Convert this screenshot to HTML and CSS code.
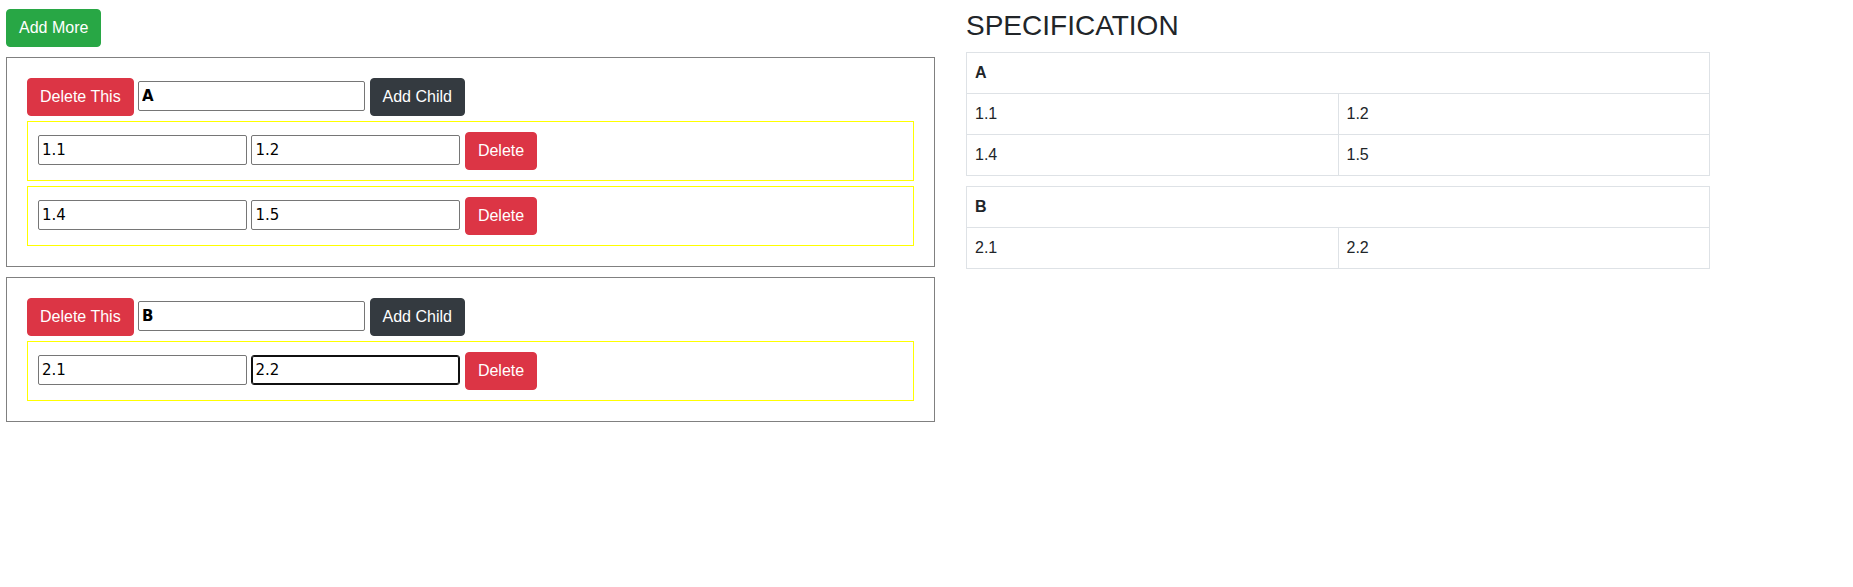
FILE: index.html
```html
<!DOCTYPE html>
<html lang="en">
<head>
<meta charset="utf-8">
<title>Specification</title>
<link rel="stylesheet" href="styles.css">
</head>
<body>
<div class="page">
  <div class="editor">
    <button class="btn btn-success add-more">Add More</button>

    <div class="group">
      <div class="row">
        <button class="btn btn-danger">Delete This</button>
        <input class="field field-title" type="text" value="A">
        <button class="btn btn-dark">Add Child</button>
      </div>
      <div class="child">
        <div class="row">
          <input class="field field-child" type="text" value="1.1">
          <input class="field field-child" type="text" value="1.2">
          <button class="btn btn-danger">Delete</button>
        </div>
      </div>
      <div class="child">
        <div class="row">
          <input class="field field-child" type="text" value="1.4">
          <input class="field field-child" type="text" value="1.5">
          <button class="btn btn-danger">Delete</button>
        </div>
      </div>
    </div>

    <div class="group">
      <div class="row">
        <button class="btn btn-danger">Delete This</button>
        <input class="field field-title" type="text" value="B">
        <button class="btn btn-dark">Add Child</button>
      </div>
      <div class="child">
        <div class="row">
          <input class="field field-child" type="text" value="2.1">
          <input class="field field-child is-focused" type="text" value="2.2">
          <button class="btn btn-danger">Delete</button>
        </div>
      </div>
    </div>
  </div>

  <div class="spec">
    <h3 class="spec-title">SPECIFICATION</h3>
    <table class="spec-table">
      <tr><th colspan="2">A</th></tr>
      <tr><td>1.1</td><td>1.2</td></tr>
      <tr><td>1.4</td><td>1.5</td></tr>
    </table>
    <table class="spec-table">
      <tr><th colspan="2">B</th></tr>
      <tr><td>2.1</td><td>2.2</td></tr>
    </table>
  </div>
</div>
</body>
</html>
```

FILE: styles.css
```css
* {
  box-sizing: border-box;
}

body {
  margin: 0;
  background: #fff;
  color: #212529;
  font-family: "Liberation Sans", Arial, sans-serif;
  font-size: 16px;
  line-height: 1.5;
}

.page {
  display: flex;
  align-items: flex-start;
  padding: 9px 0 0 6px;
}

.editor {
  width: 929px;
  display: flex;
  flex-direction: column;
  align-items: flex-start;
}

.btn {
  display: inline-block;
  font-family: "Liberation Sans", Arial, sans-serif;
  font-size: 16px;
  line-height: 24px;
  font-weight: 400;
  padding: 6px 12px;
  border: 1px solid transparent;
  border-radius: 4px;
  color: #fff;
  cursor: pointer;
  white-space: nowrap;
}

.btn-success {
  background: #28a745;
  border-color: #28a745;
}

.btn-danger {
  background: #dc3545;
  border-color: #dc3545;
}

.btn-dark {
  background: #343a40;
  border-color: #343a40;
}

.add-more {
  margin-bottom: 10px;
}

.group {
  align-self: stretch;
  border: 1px solid #808080;
  padding: 20px;
  margin-bottom: 10px;
  display: flex;
  flex-direction: column;
  gap: 5px;
}

.row {
  display: flex;
  align-items: flex-start;
  gap: 4.45px;
}

.child {
  border: 1px solid #ffff00;
  padding: 10px;
}

.field {
  height: 30px;
  margin-top: 3px;
  padding: 0 3px;
  border: 1px solid #767676;
  border-radius: 2px;
  background: #fff;
  color: #000;
  font-family: "DejaVu Sans", sans-serif;
  font-size: 15px;
  outline: none;
}

.field-title {
  width: 227px;
  font-weight: 700;
}

.field-child {
  width: 209px;
}

.field.is-focused {
  border-color: #101010;
  border-radius: 3px;
  box-shadow: inset 0 0 0 1px #101010;
}

.spec {
  width: 744px;
  margin-left: 31px;
}

.spec-title {
  margin: 0 0 9px;
  font-size: 28px;
  font-weight: 500;
  line-height: 1.2;
  color: #212529;
}

.spec-table {
  width: 100%;
  border-collapse: collapse;
  margin-bottom: 10px;
  table-layout: fixed;
}

.spec-table th,
.spec-table td {
  border: 1px solid #dee2e6;
  padding: 8px;
  text-align: left;
  vertical-align: top;
  line-height: 24px;
}

.spec-table th {
  font-weight: 700;
}
```
